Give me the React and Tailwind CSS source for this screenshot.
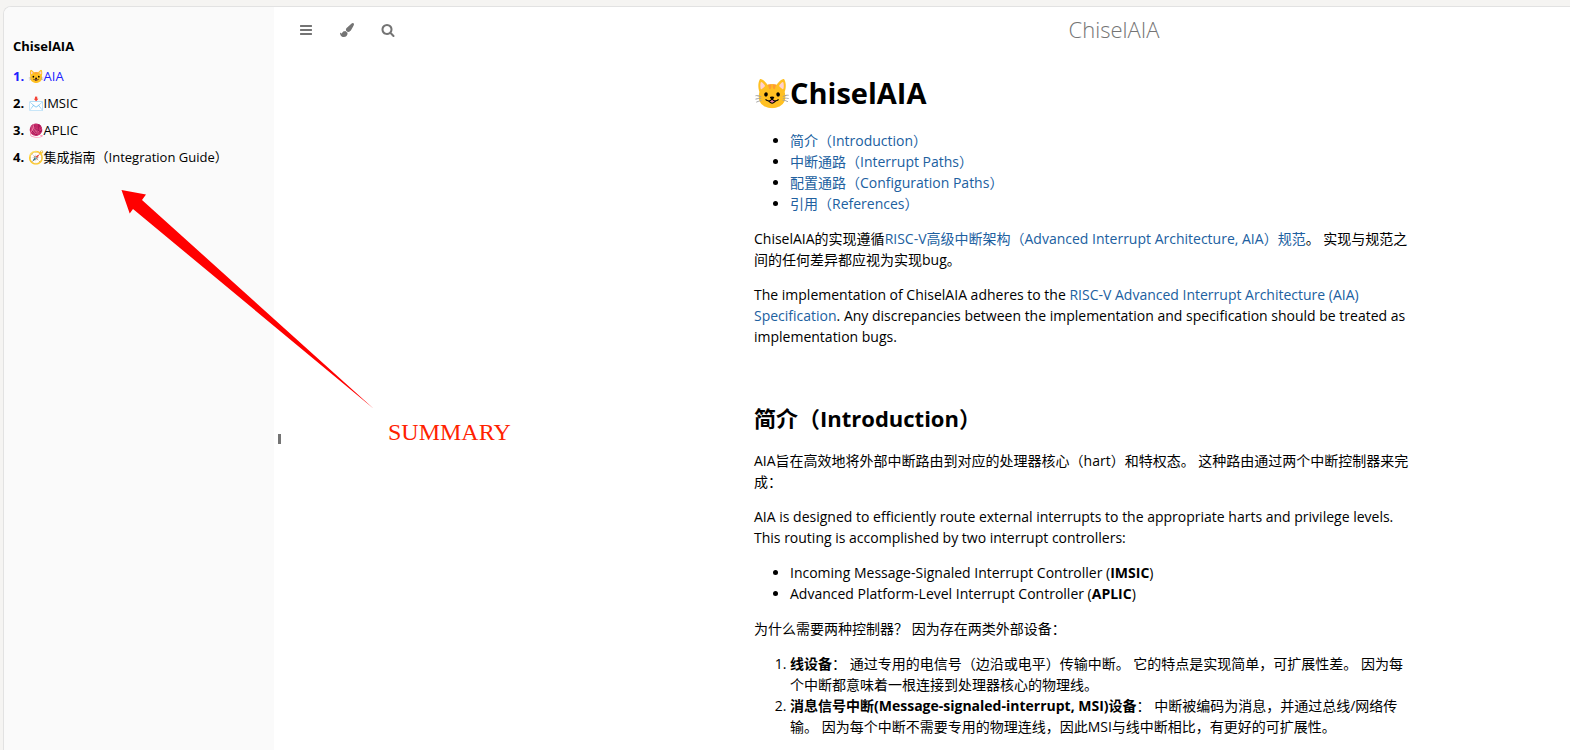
import React from "react";

const chapters = [
  { icon: "😺", title: "AIA", active: true },
  { icon: "📩", title: "IMSIC" },
  { icon: "🧶", title: "APLIC" },
  { icon: "🧭", title: "集成指南（Integration Guide）" },
];

const sections = [
  "简介（Introduction）",
  "中断通路（Interrupt Paths）",
  "配置通路（Configuration Paths）",
  "引用（References）",
];

const tools = [
  {
    label: "Toggle table of contents",
    path: "M1664 1344v128q0 26-19 45t-45 19h-1408q-26 0-45-19t-19-45v-128q0-26 19-45t45-19h1408q26 0 45 19t19 45zm0-512v128q0 26-19 45t-45 19h-1408q-26 0-45-19t-19-45v-128q0-26 19-45t45-19h1408q26 0 45 19t19 45zm0-512v128q0 26-19 45t-45 19h-1408q-26 0-45-19t-19-45v-128q0-26 19-45t45-19h1408q26 0 45 19t19 45z",
  },
  {
    label: "Change theme",
    path: "M1615 0q70 0 122.500 46.500t52.500 116.500q0 63-45 151-332 629-465 752-97 91-218 91-126 0-216.500-92.500t-90.500-219.500q0-128 92-212l638-579q59-54 130-54zm-909 1034q39 76 106.500 130t150.500 76l1 71q4 213-129.500 347t-348.500 134q-123 0-218-46.500t-152.500-127.500-86.500-183-29-220q7 5 41 30t62 44.500 59 36.500 46 17q41 0 55-37 25-66 57.500-112.500t69.500-76 88-47.500 103-25.500 125-10.500z",
  },
  {
    label: "Search",
    path: "M1216 832q0-185-131.500-316.500t-316.500-131.500-316.500 131.500-131.500 316.500 131.500 316.500 316.500 131.500 316.500-131.500 131.500-316.500zm512 832q0 52-38 90t-90 38q-54 0-90-38l-343-342q-179 124-399 124-143 0-273.500-55.500t-225-150-150-225-55.500-273.500 55.500-273.500 150-225 225-150 273.500-55.500 273.500 55.500 225 150 150 225 55.500 273.500q0 220-124 399l343 343q37 37 37 90z",
  },
];

function A({ children }) {
  return <a href="#" className="text-[#20609f]">{children}</a>;
}

function Sidebar() {
  return (
    <nav className="w-[270px] shrink-0 bg-[#fafafa] px-[9px] pt-[29px] text-[13px] leading-[21px]">
      <ol>
        <li className="mb-[9px] font-bold"><a href="#">ChiselAIA</a></li>
        {chapters.map((c, i) => (
          <li key={c.title} className="mb-[6px] whitespace-nowrap">
            <a href="#" className={c.active ? "text-[#2020ff]" : ""}>
              <strong>{i + 1}.</strong> {c.icon}{c.title}
            </a>
          </li>
        ))}
      </ol>
    </nav>
  );
}

export default function App() {
  return (
    <div className="h-screen overflow-hidden bg-[#f5f4f2] pl-[3px] pt-[6px] font-['Open_Sans','Noto_Sans_CJK_SC',sans-serif] text-black">
      <div className="relative flex h-full overflow-hidden rounded-tl-lg border-l border-t border-[#e2e2e2] bg-white">
        <Sidebar />
        <div className="flex w-2 shrink-0 items-center justify-end pr-px pt-[120px]">
          <span className="h-[10px] w-[3px] bg-[#747474]" />
        </div>
        <div className="min-w-0 flex-1">
          <header className="flex h-[45px] items-center">
            <div className="flex w-[140px] items-center gap-[27px] pl-[17px] text-[#747474]">
              {tools.map((t) => (
                <button key={t.label} type="button" aria-label={t.label}>
                  <svg width="14" height="14" viewBox="0 0 1792 1792" fill="currentColor" aria-hidden="true"><path d={t.path} /></svg>
                </button>
              ))}
            </div>
            <h1 className="flex-1 pl-[236px] text-center text-[22px] font-extralight leading-[31px] text-[#747474]">ChiselAIA</h1>
          </header>
          <main className="ml-[472px] max-w-[657px] text-[14px] leading-[21px]">
            <h1 className="mt-[20px] text-[29px] font-bold leading-[42px]">😺ChiselAIA</h1>
            <ul className="mt-[16px] list-disc pl-9">
              {sections.map((s) => <li key={s}><A>{s}</A></li>)}
            </ul>
            <p className="my-[14px]">ChiselAIA的实现遵循<A>RISC-V高级中断架构（Advanced Interrupt Architecture, AIA）规范</A>。 实现与规范之间的任何差异都应视为实现bug。</p>
            <p className="my-[14px]">The implementation of ChiselAIA adheres to the <A>RISC-V Advanced Interrupt Architecture (AIA) Specification</A>. Any discrepancies between the implementation and specification should be treated as implementation bugs.</p>
            <h2 className="mb-[16px] mt-[55px] text-[22px] font-bold leading-[32px]">简介（Introduction）</h2>
            <p className="my-[14px]">AIA旨在高效地将外部中断路由到对应的处理器核心（hart）和特权态。 这种路由通过两个中断控制器来完成：</p>
            <p className="my-[14px]">AIA is designed to efficiently route external interrupts to the appropriate harts and privilege levels. This routing is accomplished by two interrupt controllers:</p>
            <ul className="my-[14px] list-disc pl-9">
              <li>Incoming Message-Signaled Interrupt Controller (<strong>IMSIC</strong>)</li>
              <li>Advanced Platform-Level Interrupt Controller (<strong>APLIC</strong>)</li>
            </ul>
            <p className="my-[14px]">为什么需要两种控制器？ 因为存在两类外部设备：</p>
            <ol className="my-[14px] list-decimal pl-9">
              <li><strong>线设备</strong>： 通过专用的电信号（边沿或电平）传输中断。 它的特点是实现简单，可扩展性差。 因为每个中断都意味着一根连接到处理器核心的物理线。</li>
              <li><strong>消息信号中断(Message-signaled-interrupt, MSI)设备</strong>： 中断被编码为消息，并通过总线/网络传输。 因为每个中断不需要专用的物理连线，因此MSI与线中断相比，有更好的可扩展性。</li>
            </ol>
          </main>
        </div>
        <svg className="pointer-events-none absolute left-[117px] top-[182px]" width="256" height="222" viewBox="0 0 256 222" aria-hidden="true">
          <path d="M0.500 1 25 5.500 21 11 253 220 12 20 8.700 24.500Z" fill="#ff0000" />
        </svg>
        <p className="absolute left-[384px] top-[409px] font-['Liberation_Serif',serif] text-[24px] leading-[32px] text-[#ff2200]">SUMMARY</p>
      </div>
    </div>
  );
}
